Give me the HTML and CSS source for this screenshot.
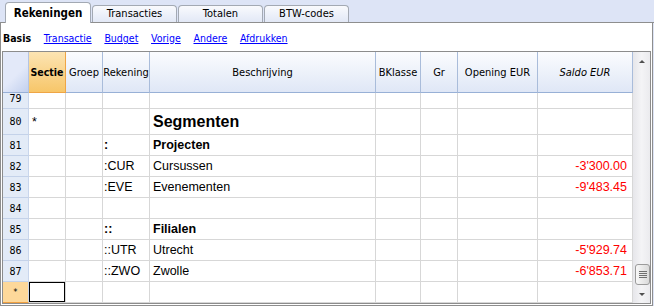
FILE: index.html
```html
<!DOCTYPE html>
<html lang="nl">
<head>
    <meta charset="UTF-8">
    <title>Rekeningen</title>
    <link rel="stylesheet" href="styles.css">
</head>
<body>
<div class="tabs">
    <div class="tab active">Rekeningen</div>
    <div class="tab">Transacties</div>
    <div class="tab">Totalen</div>
    <div class="tab">BTW-codes</div>
</div>
<div class="panel">
    <div class="views">
        <b>Basis</b>
        <a href="#">Transactie</a>
        <a href="#">Budget</a>
        <a href="#">Vorige</a>
        <a href="#">Andere</a>
        <a href="#">Afdrukken</a>
    </div>
    <div class="grid">
        <div class="grid-main">
            <table class="head">
                <colgroup>
                    <col class="c-nr"><col class="c-sec"><col class="c-grp"><col class="c-rek"><col class="c-bes">
                    <col class="c-bkl"><col class="c-gr"><col class="c-open"><col class="c-saldo">
                </colgroup>
                <tr>
                    <th class="corner"></th>
                    <th class="current">Sectie</th>
                    <th>Groep</th>
                    <th><span class="clip">Rekening</span></th>
                    <th>Beschrijving</th>
                    <th>BKlasse</th>
                    <th>Gr</th>
                    <th>Opening EUR</th>
                    <th class="calc">Saldo EUR</th>
                </tr>
            </table>
            <div class="rows">
                <table class="body">
                    <colgroup>
                        <col class="c-nr"><col class="c-sec"><col class="c-grp"><col class="c-rek"><col class="c-bes">
                        <col class="c-bkl"><col class="c-gr"><col class="c-open"><col class="c-saldo">
                    </colgroup>
                    <tr><td class="nr">79</td><td></td><td></td><td></td><td></td><td></td><td></td><td></td><td></td></tr>
                    <tr class="big"><td class="nr">80</td><td>*</td><td></td><td></td><td class="title">Segmenten</td><td></td><td></td><td></td><td></td></tr>
                    <tr><td class="nr">81</td><td></td><td></td><td class="rek bold">:</td><td class="bold">Projecten</td><td></td><td></td><td></td><td></td></tr>
                    <tr><td class="nr">82</td><td></td><td></td><td class="rek">:CUR</td><td>Cursussen</td><td></td><td></td><td></td><td class="neg">-3'300.00</td></tr>
                    <tr><td class="nr">83</td><td></td><td></td><td class="rek">:EVE</td><td>Evenementen</td><td></td><td></td><td></td><td class="neg">-9'483.45</td></tr>
                    <tr><td class="nr">84</td><td></td><td></td><td></td><td></td><td></td><td></td><td></td><td></td></tr>
                    <tr><td class="nr">85</td><td></td><td></td><td class="rek bold">::</td><td class="bold">Filialen</td><td></td><td></td><td></td><td></td></tr>
                    <tr><td class="nr">86</td><td></td><td></td><td class="rek">::UTR</td><td>Utrecht</td><td></td><td></td><td></td><td class="neg">-5'929.74</td></tr>
                    <tr><td class="nr">87</td><td></td><td></td><td class="rek">::ZWO</td><td>Zwolle</td><td></td><td></td><td></td><td class="neg">-6'853.71</td></tr>
                    <tr class="new"><td class="nr">*</td><td class="sel"></td><td></td><td></td><td></td><td></td><td></td><td></td><td></td></tr>
                </table>
            </div>
        </div>
        <div class="scrollbar">
            <div class="arrow"><span class="tri up"></span></div>
            <div class="track">
                <div class="thumb"><span class="grip"></span></div>
            </div>
            <div class="arrow"><span class="tri down"></span></div>
        </div>
    </div>
</div>
</body>
</html>
```

FILE: styles.css
```css
body {
    margin: 0;
    width: 654px;
    height: 306px;
    overflow: hidden;
    background: #dde4f6;
    font-family: "DejaVu Sans Condensed", "Liberation Sans", sans-serif;
    font-size: 10.5px;
    color: #000;
}

/* tabs */
.tabs {
    display: flex;
    align-items: flex-end;
    gap: 1px;
    height: 23px;
    padding-left: 5px;
    box-sizing: border-box;
    background: linear-gradient(to top, #8e8e8e 1px, transparent 1px);
}

.tab {
    width: 85px;
    height: 17px;
    margin-bottom: 1px;
    box-sizing: border-box;
    border: 1px solid #a3a9b3;
    border-bottom: 0;
    border-radius: 4px 4px 0 0;
    background: linear-gradient(#f9fafd, #e2e8f6);
    text-align: center;
    font-size: 11px;
    line-height: 16px;
}

.tab.active {
    width: 86px;
    height: 21px;
    margin-bottom: 0;
    background: #fff;
    font-weight: bold;
    font-size: 11.5px;
    line-height: 21px;
}

/* panel */
.panel {
    height: 282px;
    margin-right: 1px;
    padding: 0 1px;
    border: 1px solid #8e8e8e;
    border-top: 0;
    background: #fff;
}

.views {
    display: flex;
    align-items: center;
    gap: 12.7px;
    height: 28px;
    padding: 2px 0 0 1px;
    box-sizing: border-box;
}

.views a {
    color: #0000ff;
}

/* grid */
.grid {
    display: flex;
    height: 253px;
    border: 1px solid #8c8c8c;
    box-sizing: border-box;
}

.grid-main {
    width: 630px;
}

.rows {
    height: 210px;
    overflow: hidden;
}

table {
    border-collapse: separate;
    border-spacing: 0;
    table-layout: fixed;
    width: 630px;
}

.c-nr { width: 26px; }
.c-sec { width: 37px; }
.c-grp { width: 37px; }
.c-rek { width: 47px; }
.c-bes { width: 226px; }
.c-bkl { width: 45px; }
.c-gr { width: 37px; }
.c-open { width: 80px; }
.c-saldo { width: 95px; }

th, td {
    box-sizing: border-box;
    padding: 0 3px;
    overflow: hidden;
    white-space: nowrap;
}

th {
    height: 41px;
    padding: 0 1px;
    font-size: 11px;
    font-weight: normal;
    text-align: center;
    border-right: 1px solid #a9bcda;
    border-bottom: 1px solid #98b0d6;
    background: linear-gradient(#fbfcfe, #dfe7f6);
}

th.corner {
    border-right-color: #b4c4e2;
    background: linear-gradient(135deg, #e3e9f9 55%, #c2d0ee);
}

th.current {
    font-size: 10.5px;
    font-weight: bold;
    border-right-color: #efa545;
    border-bottom-color: #efa545;
    background: linear-gradient(#fce4b3, #f7c669);
}

th.calc {
    font-style: italic;
}

.clip {
    display: block;
    margin: 0 -8px;
    text-align: center;
}

table.body {
    margin-top: -5px;
}

td {
    height: 21px;
    font-family: "Liberation Sans", Arial, sans-serif;
    font-size: 12.5px;
    border-right: 1px solid #d7d7d7;
    border-bottom: 1px solid #d7d7d7;
}

tr.big td {
    height: 26px;
}

td.nr {
    padding: 0;
    text-align: center;
    font-family: "DejaVu Sans Mono", monospace;
    font-size: 10px;
    background: #e3ebf7;
    border-right-color: #c9d6ec;
    border-bottom-color: #c4d2e9;
}

td.rek {
    padding-left: 1px;
}

td.title {
    font-weight: bold;
    font-size: 16px;
}

td.bold {
    font-weight: bold;
}

td.neg {
    color: #ff0000;
    text-align: right;
    padding-right: 5px;
}

tr.new td.nr {
    background: #fdd89a;
    border-bottom-color: #f0a040;
    font-size: 8px;
}

td.sel {
    box-shadow: inset 0 0 0 1px #000;
}

/* scrollbar */
.scrollbar {
    width: 17px;
    display: flex;
    flex-direction: column;
    background: linear-gradient(to right, #e6e6ea, #f4f4f6 50%, #ebebee);
}

.arrow {
    height: 18px;
    display: flex;
    align-items: center;
    justify-content: center;
}

.tri {
    width: 0;
    height: 0;
    border-left: 3px solid transparent;
    border-right: 3px solid transparent;
}

.tri.up {
    border-bottom: 3px solid #505050;
}

.tri.down {
    border-top: 3px solid #505050;
}

.track {
    flex: 1;
    display: flex;
    flex-direction: column;
    justify-content: flex-end;
}

.thumb {
    height: 21px;
    margin-left: 2px;
    box-sizing: border-box;
    border: 1px solid #9b9b9b;
    border-radius: 3px;
    background: linear-gradient(to right, #f8f8f8, #dadada);
    display: flex;
    align-items: center;
    justify-content: center;
}

.grip {
    width: 8px;
    height: 7px;
    background: repeating-linear-gradient(#6e6e6e 0 1px, transparent 1px 2px);
}
```
